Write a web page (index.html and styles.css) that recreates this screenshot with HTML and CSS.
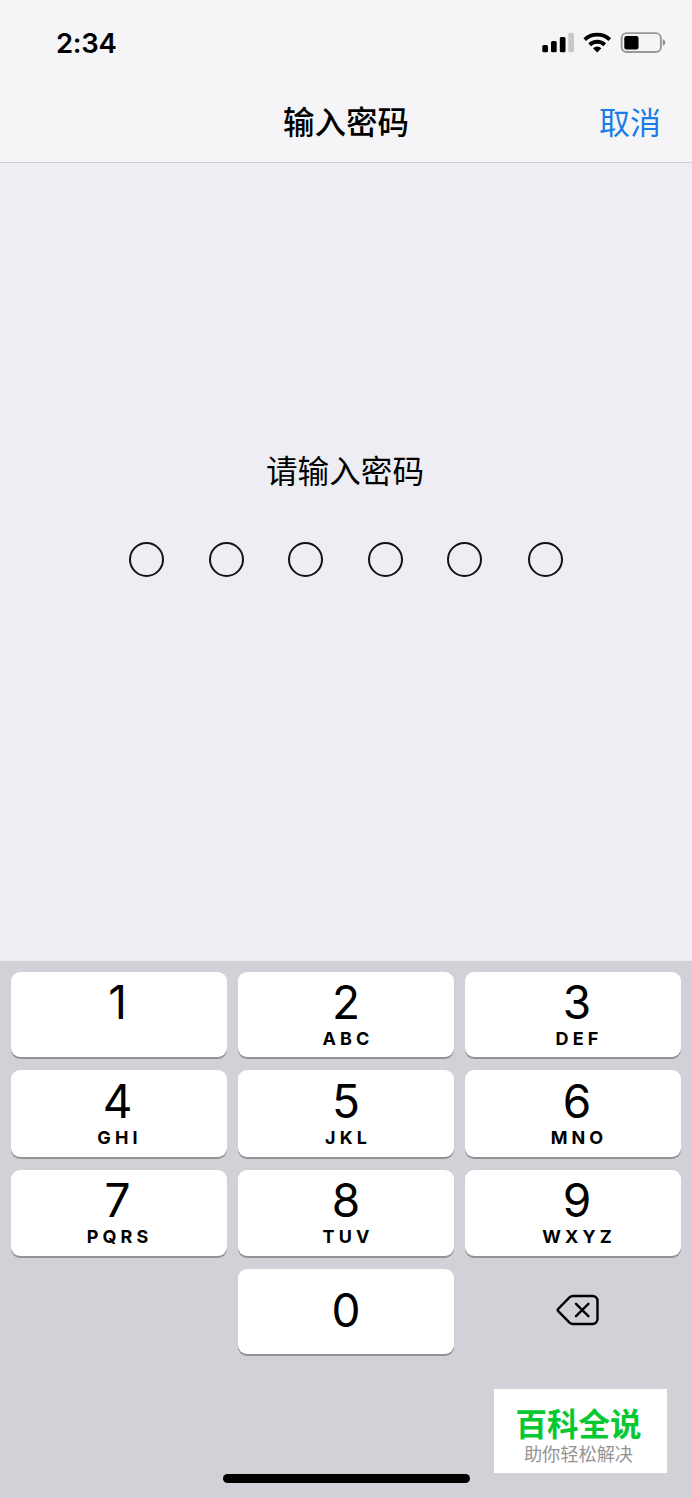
FILE: index.html
```html
<!DOCTYPE html>
<html lang="zh-CN">
<head>
    <meta charset="UTF-8">
    <title>输入密码</title>
    <link rel="stylesheet" href="styles.css">
</head>
<body>
    <header class="header">
        <div class="status-bar">
            <span class="time">2:34</span>
            <svg class="status-icons" width="126" height="26" viewBox="0 0 126 26">
                <!-- signal -->
                <rect x="2.3" y="15" width="5.7" height="7.2" rx="1.5"/>
                <rect x="11" y="11" width="5.7" height="11.2" rx="1.5"/>
                <rect x="19.8" y="7" width="5.7" height="15.2" rx="1.5"/>
                <rect x="28.3" y="2.8" width="5.7" height="19.4" rx="1.5" fill="#c8c8ca"/>
                <!-- wifi -->
                <path d="M43.4 8.2l2.6 2.8a16.2 16.2 0 0 1 22.4 0l2.6-2.8a19.9 19.9 0 0 0-27.6 0z"/>
                <path d="M48.3 13.3l2.7 3a9.1 9.1 0 0 1 12.4 0l2.7-3a12.9 12.9 0 0 0-17.8 0z"/>
                <path d="M53 18.2l4.2 4.2 4.2-4.2a6.1 6.1 0 0 0-8.4 0z"/>
                <!-- battery -->
                <rect x="81.6" y="3.1" width="39.3" height="18.9" rx="5" fill="none" stroke="#98989b" stroke-width="1.9"/>
                <rect x="84.3" y="6" width="14.2" height="13.4" rx="2.2"/>
                <path d="M122.8 9.3c3.3 1.1 3.3 5.4 0 6.5z" fill="#8e8e91"/>
            </svg>
        </div>
        <div class="nav-bar">
            <h1 class="title">输入密码</h1>
            <a class="cancel">取消</a>
        </div>
    </header>

    <main class="content">
        <p class="prompt">请输入密码</p>
        <div class="dots">
            <span class="dot"></span>
            <span class="dot"></span>
            <span class="dot"></span>
            <span class="dot"></span>
            <span class="dot"></span>
            <span class="dot"></span>
        </div>
    </main>

    <div class="keypad">
        <div class="keys">
            <div class="key key-left"><span class="num">1</span></div>
            <div class="key"><span class="num">2</span><span class="letters">ABC</span></div>
            <div class="key key-right"><span class="num">3</span><span class="letters">DEF</span></div>
            <div class="key key-left"><span class="num">4</span><span class="letters">GHI</span></div>
            <div class="key"><span class="num">5</span><span class="letters">JKL</span></div>
            <div class="key key-right"><span class="num">6</span><span class="letters">MNO</span></div>
            <div class="key key-left"><span class="num">7</span><span class="letters">PQRS</span></div>
            <div class="key"><span class="num">8</span><span class="letters">TUV</span></div>
            <div class="key key-right"><span class="num">9</span><span class="letters">WXYZ</span></div>
            <div class="key key-zero"><span class="num">0</span></div>
            <div class="delete">
                <svg width="44" height="34" viewBox="0 0 44 34" fill="none" stroke="#000" stroke-width="2.4" stroke-linecap="round" stroke-linejoin="round">
                    <path d="M17 3H36.5a5 5 0 0 1 5 5V26a5 5 0 0 1-5 5H17a5 5 0 0 1-3.5-1.4L2.2 18.2a1.6 1.6 0 0 1 0-2.4L13.5 4.4A5 5 0 0 1 17 3z"/>
                    <path d="M20 10.8l12.4 12.4M32.4 10.8L20 23.2"/>
                </svg>
            </div>
        </div>
        <div class="home-bar"></div>
        <div class="badge">
            <div class="badge-name">百科全说</div>
            <div class="badge-text">助你轻松解决</div>
        </div>
    </div>
</body>
</html>
```
FILE: styles.css
```css
* { box-sizing: border-box; }
body {
    display: flex;
    flex-direction: column;
    width: 692px;
    height: 1498px;
    margin: 0;
    background-color: #eeedf3;
    color: #000;
    font-family: Inter, "Noto Sans CJK SC", sans-serif;
}

/* Header */
.header {
    height: 163px;
    background-color: #f5f5f7;
    border-bottom: 1px solid #cdcdd2;
}
.status-bar {
    display: flex;
    justify-content: space-between;
    align-items: center;
    height: 85px;
    padding: 0 26px 0 56px;
}
.time { font-size: 27.5px; font-weight: 600; letter-spacing: -0.3px; }
.nav-bar {
    display: grid;
    grid-template-columns: 1fr auto 1fr;
    align-items: center;
    height: 75px;
    padding: 0 31px;
}
.title { grid-column: 2; margin: 0; font-size: 31.5px; font-weight: 500; line-height: 46px; }
.cancel { justify-self: end; color: #1b7ce5; font-size: 31px; line-height: 46px; font-weight: 400; }

/* Passcode */
.content { height: 798px; padding-top: 286px; }
.prompt { margin: 0; padding-right: 2px; text-align: center; font-size: 31.6px; line-height: 46px; }
.dots { display: flex; gap: 44.5px; width: 434px; margin: 47px auto 0; }
.dot { width: 35px; height: 35px; border: 2px solid #111116; border-radius: 50%; }
.dot:last-child { margin-left: auto; }

/* Keypad */
.keypad { position: relative; flex: 1; padding: 11px; background-color: #d1d2d8; }
.keys {
    display: grid;
    grid-template-columns: repeat(3, 216px);
    grid-template-rows: 85px 87px 86px 85px;
    gap: 13px 11px;
}
.key {
    display: flex;
    flex-direction: column;
    align-items: center;
    padding-top: 6px;
    background-color: #fff;
    border-radius: 9px;
    box-shadow: 0 2px 0 #929397;
}
.key:nth-child(-n+3), .key:nth-child(n+7) { padding-top: 5px; }
.key-left { padding-right: 3px; }
.key-right { padding-left: 8px; }
.key.key-zero { grid-column: 2; padding-top: 16px; }
.num { font-size: 46px; line-height: 50px; }
.letters { margin-top: 2px; padding-left: 4px; font-size: 18px; line-height: 20px; font-weight: 700; letter-spacing: 4.1px; }
.delete { display: flex; justify-content: center; align-items: center; padding: 0 0 4px 10px; }
.home-bar { width: 247px; height: 9px; margin: 120px auto 0; background-color: #000; border-radius: 5px; }

.badge {
    position: absolute;
    right: 25px;
    bottom: 25px;
    width: 173px;
    height: 84px;
    padding: 13px 4px 0 0;
    background-color: #fff;
    text-align: center;
}
.badge-name { color: #08c832; font-size: 31.5px; font-weight: 700; line-height: 46px; }
.badge-text { margin-top: -7px; color: #949494; font-size: 18.2px; line-height: 26px; }
```
